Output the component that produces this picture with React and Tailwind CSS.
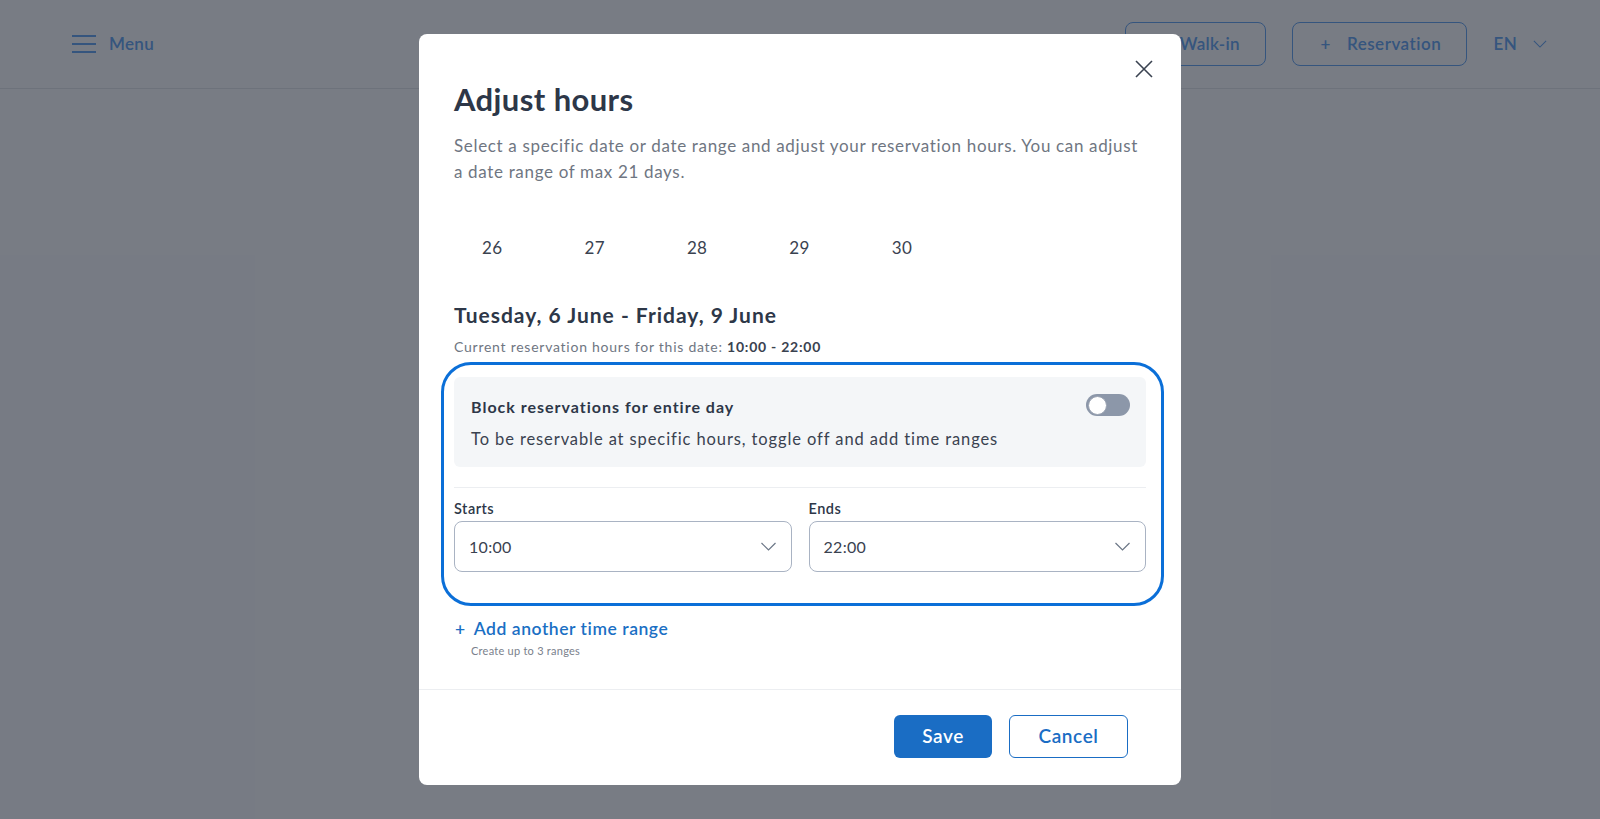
import React from 'react'

const font = { fontFamily: 'Lato, "Open Sans", sans-serif' }

function Chevron({ className }) {
  return (
    <svg viewBox="0 0 16 9" className={className} fill="none">
      <path d="M1 1l7 7 7-7" stroke="currentColor" strokeWidth="1.2" />
    </svg>
  )
}

function Header() {
  return (
    <div className="flex h-[89px] items-center justify-between border-b border-[#e5e7eb] pl-[72px] pr-[53px] text-[#64a4f0]">
      <div className="flex items-center gap-[13px]">
        <svg viewBox="0 0 24 18" className="h-[18px] w-[24px]" fill="none">
          <path d="M0 1h24M0 9h24M0 17h24" stroke="currentColor" strokeWidth="2" />
        </svg>
        <span className="text-[17px] font-semibold tracking-[0.3px]">Menu</span>
      </div>
      <div className="flex items-center">
        <button className="flex h-[44px] w-[141px] items-center gap-[16px] rounded-[8px] border-[1.5px] border-[#64a4f0] pl-[28px] text-[17px] font-semibold tracking-[0.3px]">
          <span>+</span>
          <span>Walk-in</span>
        </button>
        <button className="ml-[26px] flex h-[44px] w-[175px] items-center gap-[16px] rounded-[8px] border-[1.5px] border-[#64a4f0] pl-[28px] text-[17px] font-semibold tracking-[0.5px]">
          <span>+</span>
          <span>Reservation</span>
        </button>
        <div className="ml-[27px] flex items-center gap-[16px]">
          <span className="text-[17px] font-semibold tracking-[0.3px]">EN</span>
          <Chevron className="h-[8px] w-[14px]" />
        </div>
      </div>
    </div>
  )
}

function Select({ label, value }) {
  return (
    <div className="flex-1">
      <div className="text-[14.5px] font-semibold leading-[20px] tracking-[0.5px] text-[#2d3748]">
        {label}
      </div>
      <div className="mt-[2px] flex h-[51px] items-center justify-between rounded-[8px] border border-[#a9b3c3] pl-[14px] pr-[14px] text-[16px] tracking-[0.3px] text-[#3a4250]">
        <span>{value}</span>
        <Chevron className="h-[9px] w-[17px] text-[#6b7686]" />
      </div>
    </div>
  )
}

export default function App() {
  const days = [26, 27, 28, 29, 30]

  return (
    <div className="relative h-[819px] w-full overflow-hidden bg-white" style={font}>
      <Header />

      {/* overlay + modal */}
      <div className="absolute inset-0 flex justify-center bg-[#111827]/[0.57] pt-[34px]">
        <div className="relative h-[751px] w-[762px] rounded-[8px] bg-white">
          <button className="absolute right-[28px] top-[26px] text-[#3a4250]">
            <svg viewBox="0 0 18 18" className="h-[18px] w-[18px]" fill="none">
              <path d="M1 1l16 16M17 1L1 17" stroke="currentColor" strokeWidth="1.6" />
            </svg>
          </button>

          <div className="px-[35px] pt-[47px]">
            <h2 className="text-[31px] font-bold leading-[36px] tracking-[0.4px] text-[#2d3748]">
              Adjust hours
            </h2>
            <p className="mt-[16px] text-[17px] leading-[26px] tracking-[0.66px] text-[#6f7682]">
              Select a specific date or date range and adjust your reservation
              hours. You can adjust a date range of max 21 days.
            </p>

            <div className="-ml-[13px] mt-[51px] grid w-[717px] grid-cols-7 text-[17px] leading-[24px] tracking-[0.3px] text-[#3a4250]">
              {days.map((d) => (
                <div key={d} className="text-center">
                  {d}
                </div>
              ))}
            </div>

            <h3 className="mt-[41px] text-[21px] font-bold leading-[28px] tracking-[1px] text-[#2d3748]">
              Tuesday, 6 June - Friday, 9 June
            </h3>
            <p className="mt-[8px] text-[14px] leading-[20px] tracking-[0.75px] text-[#6f7682]">
              Current reservation hours for this date:{' '}
              <span className="font-bold text-[#3a4250]">10:00 - 22:00</span>
            </p>

            {/* highlighted block */}
            <div className="-ml-[13px] -mr-[18px] mt-[5px] rounded-[30px] border-[3px] border-[#0b6fd8] pb-[31px] pl-[10px] pr-[15px] pt-[12px]">
              <div className="flex justify-between rounded-[6px] bg-[#f4f6f8] pb-[16px] pl-[17px] pr-[16px] pt-[20px]">
                <div>
                  <div className="text-[16px] font-bold leading-[20px] tracking-[1px] text-[#2d3748]">
                    Block reservations for entire day
                  </div>
                  <div className="mt-[10px] text-[16.5px] leading-[24px] tracking-[0.9px] text-[#3a4250]">
                    To be reservable at specific hours, toggle off and add time
                    ranges
                  </div>
                </div>
                <div className="mt-[-3px] flex h-[22px] w-[44px] items-center rounded-full bg-[#8c97a9] px-[2px]">
                  <div className="h-[19px] w-[19px] rounded-full border border-[#9aa3b2] bg-white" />
                </div>
              </div>
              <div className="mt-[20px] border-t border-[#eceef1]" />
              <div className="mt-[11px] flex gap-[17px]">
                <Select label="Starts" value="10:00" />
                <Select label="Ends" value="22:00" />
              </div>
            </div>

            <button className="mt-[11px] flex items-center gap-[8px] pl-[1px] text-[17.5px] font-semibold leading-[24px] tracking-[0.55px] text-[#1a6fc4]">
              <span>+</span>
              <span>Add another time range</span>
            </button>
            <div className="mt-[3px] pl-[17px] text-[11px] leading-[14px] tracking-[0.25px] text-[#7a818c]">
              Create up to 3 ranges
            </div>
          </div>

          <div className="absolute bottom-0 left-0 right-0 flex justify-end gap-[17px] border-t border-[#eceef1] pb-[27px] pr-[53px] pt-[25px]">
            <button className="h-[43px] w-[98px] rounded-[6px] bg-[#1a6dc4] text-[19px] font-semibold tracking-[0.6px] text-white">
              Save
            </button>
            <button className="h-[43px] w-[119px] rounded-[6px] border border-[#1a6dc4] text-[19px] font-semibold tracking-[0.6px] text-[#1a6dc4]">
              Cancel
            </button>
          </div>
        </div>
      </div>
    </div>
  )
}
